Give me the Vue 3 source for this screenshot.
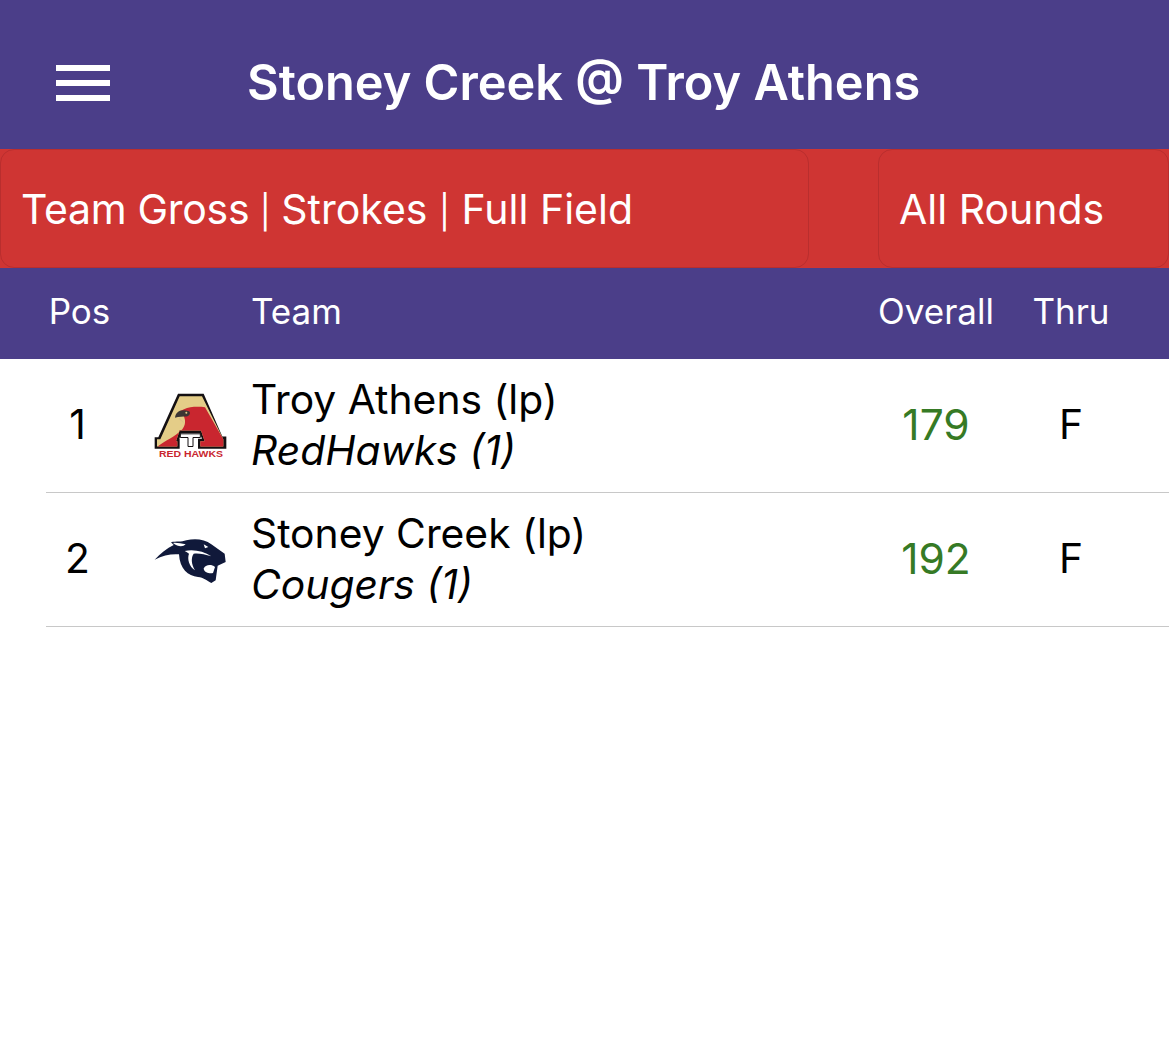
<script setup>
const columns = ['Pos', 'Team', 'Overall', 'Thru']
const rows = [
  { pos: 1, name: 'Troy Athens (lp)', nick: 'RedHawks (1)', score: 179, thru: 'F', logo: 'hawk' },
  { pos: 2, name: 'Stoney Creek (lp)', nick: 'Cougers (1)', score: 192, thru: 'F', logo: 'cougar' }
]
</script>

<template>
  <div class="page">
    <header class="top">
      <div class="burger"><span></span><span></span><span></span></div>
      <h1>Stoney Creek @ Troy Athens</h1>
    </header>
    <div class="filters">
      <div class="filter wide">
        <span><span class="tight">Team Gross</span> <i class="pipe first">|</i> Strokes <i class="pipe">|</i> Full Field</span>
      </div>
      <div class="filter narrow">All Rounds</div>
    </div>
    <div class="grid heads">
      <div class="center">{{ columns[0] }}</div>
      <div></div>
      <div>{{ columns[1] }}</div>
      <div class="center">{{ columns[2] }}</div>
      <div class="center">{{ columns[3] }}</div>
    </div>
    <div v-for="r in rows" :key="r.pos" class="grid row">
      <div class="center pos">{{ r.pos }}</div>
      <div class="logo">
        <svg v-if="r.logo === 'hawk'" class="hawk" viewBox="70 35 225 200" width="75" height="67">
          <path d="M145 40H222L278 168H290V205H205V175H217L210 158H155L149 175H150V205H75V170H86Z" fill="#141012"/>
          <path d="M150 47H217L281 176V198H212V182H225L214 150H150L139 182H143V198H82V176H92Z" fill="#e4cd88"/>
          <path d="M163 86C180 78 205 78 226 80L281 176V198H212V182H225L214 150H150L139 182H143V198H84C105 180 135 170 158 146C172 130 168 105 150 92Z" fill="#c9262f"/>
          <path d="M136 112C138 96 150 84 178 92C184 96 180 106 170 108C160 108 148 108 136 112Z" fill="#3b3533"/>
          <path d="M150 112C154 118 160 122 166 130C160 126 154 120 146 116Z" fill="#d9c38b"/>
          <circle cx="170" cy="97" r="3" fill="#e4cd88"/>
          <path d="M152 160H212V171H190V198H175V171H152Z" fill="#fff" stroke="#141012" stroke-width="3"/>
          <text x="184" y="228" text-anchor="middle" textLength="192" lengthAdjust="spacingAndGlyphs" class="hawk-text">RED HAWKS</text>
        </svg>
        <svg v-else class="cougar" viewBox="70 50 225 150" width="75" height="50">
          <path d="M75 118C92 100 112 84 132 74L124 66C140 62 155 66 170 60C195 54 225 56 245 72L285 100L288 125L264 136L258 180L245 188C230 180 222 172 205 170C175 168 150 145 148 102C125 100 100 105 75 118Z" fill="#10193a"/>
          <path d="M165 92C190 86 222 92 245 108C225 101 205 98 192 100C184 112 184 130 196 150C178 138 172 116 178 100C174 97 170 95 165 92Z" fill="#fff"/>
          <path d="M222 145C226 134 244 130 256 140L250 158C240 160 225 158 222 145Z" fill="#fff"/>
          <path d="M130 68C140 66 155 70 168 72C160 80 145 80 130 68Z" fill="#fff"/>
          <path d="M222 72L236 80L226 84Z" fill="#fff"/>
        </svg>
      </div>
      <div class="team">
        <div>{{ r.name }}</div>
        <div class="nick">{{ r.nick }}</div>
      </div>
      <div class="center score">{{ r.score }}</div>
      <div class="center">{{ r.thru }}</div>
    </div>
  </div>
</template>

<style>
html, body { background: #fff; }
</style>

<style scoped>
.page {
  width: 1169px;
  min-height: 1038px;
  background: #fff;
  font-family: Inter, "Liberation Sans", sans-serif;
  color: #000;
}
.top {
  height: 149px;
  background: #4b3e89;
  display: flex;
  align-items: center;
  padding: 16px 0 0 56px;
  box-sizing: border-box;
}
.burger {
  width: 54px;
  display: flex;
  flex-direction: column;
  gap: 9px;
  margin-right: 137px;
}
.burger span {
  height: 6px;
  background: #fff;
}
h1 {
  margin: 0;
  color: #fff;
  font-size: 48.700px;
  font-weight: 600;
  white-space: nowrap;
}
.filters {
  height: 119px;
  background: #cf3533;
  display: flex;
  justify-content: space-between;
  box-sizing: border-box;
}
.filter {
  height: 119px;
  box-sizing: border-box;
  border: 1px solid #b92e2e;
  border-radius: 14px;
  color: #fff;
  font-size: 41px;
  display: flex;
  align-items: center;
  padding-left: 20px;
  white-space: nowrap;
}
.wide { width: 809px; }
.narrow { width: 291px; }
.tight { letter-spacing: -0.3px; }
.pipe {
  font-style: normal;
  font-size: 33px;
}
.first { margin: 0 -1px; }
.grid {
  display: grid;
  grid-template-columns: 65px 140px 625px 120px 150px;
  align-items: center;
  margin-left: 46px;
}
.heads {
  height: 91px;
  margin-left: 0;
  padding: 0 0 5px 46px;
  box-sizing: border-box;
  background: #4b3e89;
  color: #fff;
  font-size: 35px;
}
.heads .center:first-child { padding-left: 2px; }
.row {
  height: 134px;
  box-sizing: border-box;
  border-bottom: 1px solid #c8c8c8;
  padding-bottom: 3px;
  font-size: 40.800px;
}
.center { text-align: center; }
.pos { padding-right: 2px; }
.logo {
  display: flex;
  justify-content: flex-start;
  margin-left: 42px;
}
.hawk { margin-top: 2px; }
.cougar { margin-top: 7px; }
.hawk-text {
  font-family: "Liberation Sans", sans-serif;
  font-size: 27px;
  font-weight: 700;
  fill: #c9262f;
}
.team {
  line-height: 51px;
  margin-top: 2px;
}
.nick { font-style: italic; }
.score { color: #367a25; font-size: 42.500px; }
</style>
